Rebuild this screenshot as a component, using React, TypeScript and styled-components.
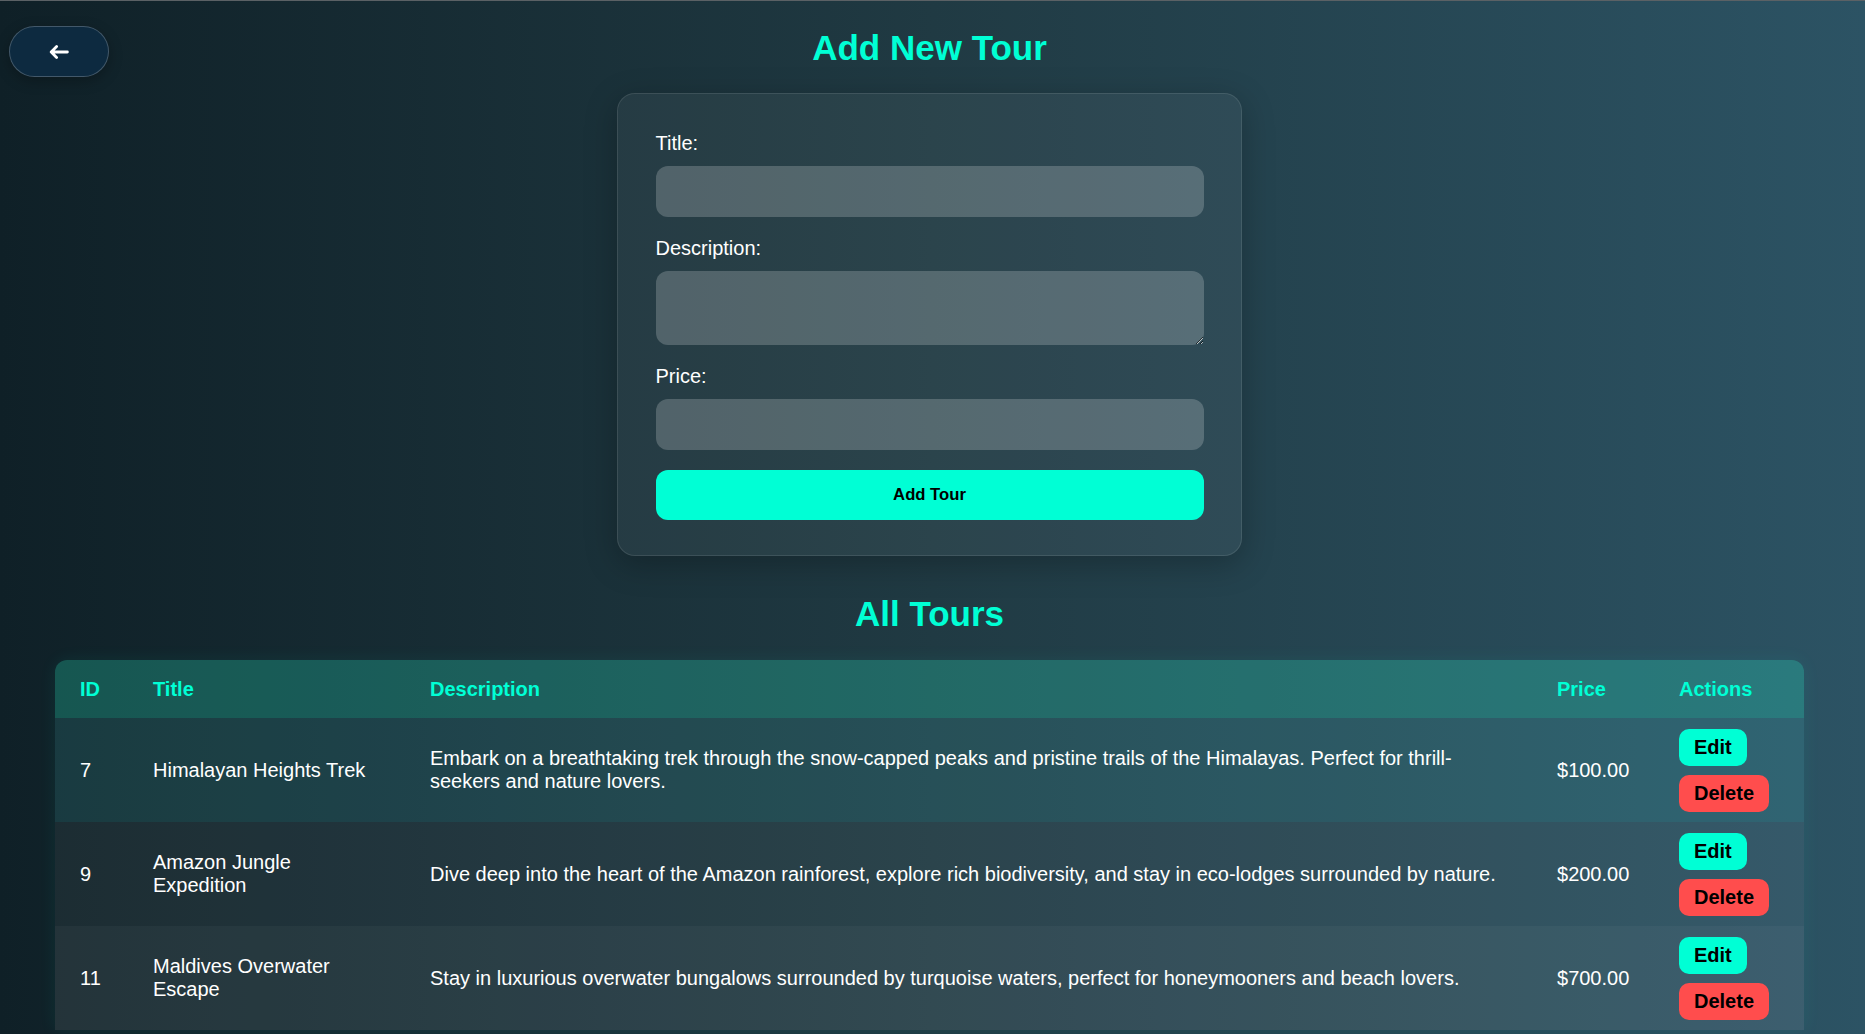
import React from "react";
import styled, { createGlobalStyle } from "styled-components";

const GlobalStyle = createGlobalStyle`
  html, body {
    margin: 0;
    padding: 0;
    height: 100%;
    overflow: hidden;
  }
  body {
    border-top: 1px solid #5b6165;
    box-sizing: border-box;
    background: linear-gradient(to right, #0f2027, #203a43, #2c5364);
    font-family: "Liberation Sans", Arial, sans-serif;
    color: #ffffff;
  }
  * { box-sizing: border-box; }
`;

const ACCENT = "#00ffd5";

const Page = styled.div`
  position: relative;
  padding: 25px 61px 0 55px;
`;

const BackButton = styled.button`
  position: absolute;
  top: 25px;
  left: 9px;
  width: 100px;
  height: 51px;
  border-radius: 26px;
  border: 1px solid rgba(255, 255, 255, 0.22);
  background: #0d2a40;
  box-shadow: 0 4px 14px rgba(0, 0, 0, 0.25);
  display: flex;
  align-items: center;
  justify-content: center;
  padding: 0;
  cursor: pointer;
`;

const Heading = styled.h1<{ $top: number }>`
  margin: ${(p) => p.$top}px 0 0;
  font-size: 35px;
  line-height: 40px;
  font-weight: 700;
  text-align: center;
  color: ${ACCENT};
`;

const FormCard = styled.form`
  width: 625px;
  margin: 25px auto 0;
  padding: 37.5px 37.5px 35.5px;
  border: 1px solid rgba(255, 255, 255, 0.1);
  border-radius: 18px;
  background: rgba(255, 255, 255, 0.05);
  box-shadow: 0 8px 32px rgba(0, 0, 0, 0.25);
`;

const Label = styled.label`
  display: block;
  font-size: 20px;
  line-height: 23px;
  margin-bottom: 11px;
  color: #ffffff;
`;

const fieldBase = `
  display: block;
  width: 100%;
  border: none;
  outline: none;
  border-radius: 12px;
  background: rgba(255, 255, 255, 0.2);
  color: #ffffff;
  font-family: "Liberation Sans", Arial, sans-serif;
  font-size: 20px;
  margin: 0 0 20px;
`;

const TextInput = styled.input`
  ${fieldBase}
  height: 51px;
  padding: 0 15px;
`;

const TextArea = styled.textarea`
  ${fieldBase}
  height: 74px;
  padding: 12px 15px;
  resize: vertical;
`;

const SubmitButton = styled.button`
  display: block;
  width: 100%;
  height: 50px;
  border: none;
  border-radius: 12px;
  background: ${ACCENT};
  color: #000000;
  font-family: "Liberation Sans", Arial, sans-serif;
  font-size: 16.67px;
  font-weight: 700;
  cursor: pointer;
`;

const Table = styled.table`
  width: 1749px;
  margin-top: 26px;
  table-layout: fixed;
  border-collapse: separate;
  border-spacing: 0;
  border-radius: 12px 12px 0 0;
  overflow: hidden;
  background: rgba(255, 255, 255, 0.05);
  box-shadow: 0 0 18px rgba(0, 255, 213, 0.07);
`;

const HeadRow = styled.tr`
  background: rgba(0, 255, 204, 0.2);
`;

const Th = styled.th`
  padding: 17.5px 25px;
  text-align: left;
  font-size: 20px;
  line-height: 23px;
  font-weight: 700;
  color: ${ACCENT};
`;

const Row = styled.tr<{ $tone: "hover" | "dark" | "light" }>`
  background: ${(p) =>
    p.$tone === "hover"
      ? "rgba(0, 230, 230, 0.08)"
      : p.$tone === "light"
      ? "rgba(255, 255, 255, 0.035)"
      : "transparent"};
`;

const Td = styled.td`
  padding: 10.5px 25px;
  vertical-align: middle;
  font-size: 20px;
  line-height: 23px;
  color: #ffffff;
`;

const Actions = styled.div`
  display: flex;
  flex-direction: column;
  align-items: flex-start;
  gap: 9px;
`;

const ActionButton = styled.button<{ $kind: "edit" | "delete" }>`
  height: 37px;
  padding: 0 15px;
  border: none;
  border-radius: 10px;
  background: ${(p) => (p.$kind === "edit" ? ACCENT : "#ff4d4d")};
  color: #000000;
  font-family: "Liberation Sans", Arial, sans-serif;
  font-size: 20px;
  font-weight: 700;
  cursor: pointer;
`;

const tours = [
  {
    id: 7,
    title: "Himalayan Heights Trek",
    description:
      "Embark on a breathtaking trek through the snow-capped peaks and pristine trails of the Himalayas. Perfect for thrill-seekers and nature lovers.",
    price: 100,
  },
  {
    id: 9,
    title: "Amazon Jungle Expedition",
    description:
      "Dive deep into the heart of the Amazon rainforest, explore rich biodiversity, and stay in eco-lodges surrounded by nature.",
    price: 200,
  },
  {
    id: 11,
    title: "Maldives Overwater Escape",
    description:
      "Stay in luxurious overwater bungalows surrounded by turquoise waters, perfect for honeymooners and beach lovers.",
    price: 700,
  },
];

const ArrowLeft = () => (
  <svg width="20" height="14" viewBox="0 0 20 14" fill="none">
    <path
      d="M18.4 7H2.2M7.6 1.6L2.2 7l5.4 5.4"
      stroke="#ffffff"
      strokeWidth="2.8"
      strokeLinecap="round"
      strokeLinejoin="round"
    />
  </svg>
);

export default function App() {
  return (
    <>
      <GlobalStyle />
      <Page>
        <BackButton type="button" aria-label="Back">
          <ArrowLeft />
        </BackButton>
        <Heading $top={2}>Add New Tour</Heading>
        <FormCard onSubmit={(e) => e.preventDefault()}>
          <Label htmlFor="title">Title:</Label>
          <TextInput id="title" type="text" />
          <Label htmlFor="description">Description:</Label>
          <TextArea id="description" />
          <Label htmlFor="price">Price:</Label>
          <TextInput id="price" type="number" />
          <SubmitButton type="submit">Add Tour</SubmitButton>
        </FormCard>
        <Heading as="h2" $top={38}>
          All Tours
        </Heading>
        <Table>
          <colgroup>
            <col style={{ width: 73 }} />
            <col style={{ width: 277 }} />
            <col style={{ width: 1127 }} />
            <col style={{ width: 122 }} />
            <col style={{ width: 150 }} />
          </colgroup>
          <thead>
            <HeadRow>
              <Th>ID</Th>
              <Th>Title</Th>
              <Th>Description</Th>
              <Th>Price</Th>
              <Th>Actions</Th>
            </HeadRow>
          </thead>
          <tbody>
            {tours.map((t, i) => (
              <Row key={t.id} $tone={i === 0 ? "hover" : i % 2 === 1 ? "dark" : "light"}>
                <Td>{t.id}</Td>
                <Td>{t.title}</Td>
                <Td>{t.description}</Td>
                <Td>${t.price.toFixed(2)}</Td>
                <Td>
                  <Actions>
                    <ActionButton type="button" $kind="edit">
                      Edit
                    </ActionButton>
                    <ActionButton type="button" $kind="delete">
                      Delete
                    </ActionButton>
                  </Actions>
                </Td>
              </Row>
            ))}
          </tbody>
        </Table>
      </Page>
    </>
  );
}
